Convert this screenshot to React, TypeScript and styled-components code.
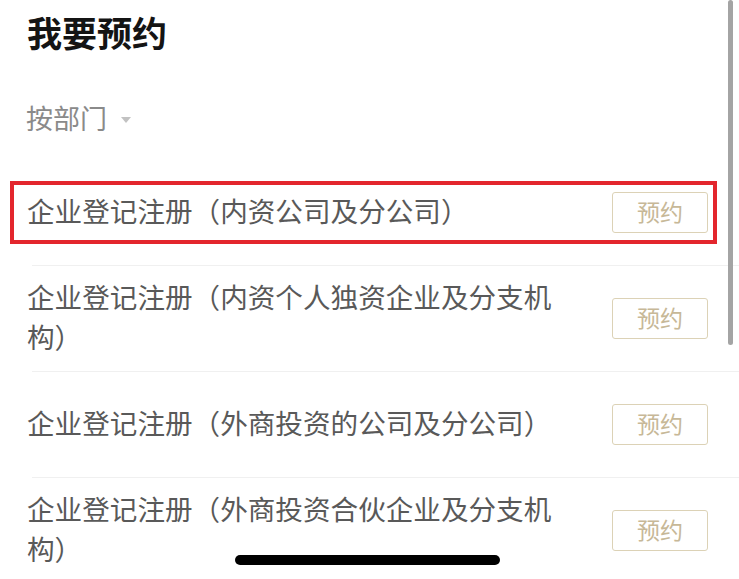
import styled, { createGlobalStyle } from 'styled-components';

const GlobalStyle = createGlobalStyle`
  html, body {
    margin: 0;
    padding: 0;
    background: #ffffff;
    overflow: hidden;
    font-family: "Noto Sans CJK SC", "Noto Sans", sans-serif;
  }
`;

const Page = styled.div`
  position: relative;
  width: 739px;
  height: 579px;
  overflow: hidden;
  background: #ffffff;
`;

const Title = styled.h1`
  margin: 12px 0 0 27px;
  font-size: 35px;
  line-height: 40px;
  font-weight: 700;
  color: #141414;
`;

const Filter = styled.div`
  display: flex;
  align-items: center;
  margin: 46px 0 0 26px;
  height: 40px;
  font-size: 27px;
  line-height: 40px;
  color: #8a8a8a;
`;

const Caret = styled.span`
  margin-left: 14px;
  margin-top: 4px;
  width: 0;
  height: 0;
  border-left: 5px solid transparent;
  border-right: 5px solid transparent;
  border-top: 6px solid #c2c2c2;
`;

const List = styled.div`
  margin-top: 22px;
  display: flex;
  flex-direction: column;
`;

const Row = styled.div`
  display: flex;
  align-items: center;
  min-height: 105px;
  padding: 0 31px 0 27px;
`;

const Item = styled.div<{ $highlighted?: boolean }>`
  flex: 1;
  display: flex;
  align-items: center;
  ${({ $highlighted }) =>
    $highlighted &&
    `
    margin: 0 -9px 0 -17px;
    padding: 5px 5px 5px 13px;
    border: 4px solid #e3262d;
  `}
`;

const Label = styled.div`
  flex: 1;
  margin-right: 40px;
  padding-bottom: 5px;
  font-size: 27.6px;
  line-height: 40px;
  color: #595959;
`;

const BookButton = styled.button`
  flex: none;
  width: 96px;
  height: 41px;
  padding: 0 0 3px;
  border: 1.5px solid #dcd2b6;
  border-radius: 3px;
  background: #ffffff;
  font-family: inherit;
  font-size: 23px;
  line-height: 1;
  color: #c7b897;
`;

const Divider = styled.div`
  height: 1px;
  margin-left: 32px;
  background: #f0f0f0;
`;

const Scrollbar = styled.div`
  position: absolute;
  top: 0;
  right: 6px;
  width: 5px;
  height: 345px;
  border-radius: 3px;
  background: #a4a4a4;
`;

const HomeIndicator = styled.div`
  position: absolute;
  left: 235px;
  top: 555px;
  width: 265px;
  height: 10px;
  border-radius: 5px;
  background: #000000;
`;

const services = [
  '企业登记注册（内资公司及分公司）',
  '企业登记注册（内资个人独资企业及分支机构）',
  '企业登记注册（外商投资的公司及分公司）',
  '企业登记注册（外商投资合伙企业及分支机构）',
];

function App() {
  return (
    <Page>
      <GlobalStyle />
      <Title>我要预约</Title>
      <Filter>
        按部门
        <Caret />
      </Filter>
      <List>
        {services.map((name, i) => (
          <div key={name}>
            {i > 0 && <Divider />}
            <Row>
              <Item $highlighted={i === 0}>
                <Label>{name}</Label>
                <BookButton>预约</BookButton>
              </Item>
            </Row>
          </div>
        ))}
      </List>
      <Scrollbar />
      <HomeIndicator />
    </Page>
  );
}

export default App;
